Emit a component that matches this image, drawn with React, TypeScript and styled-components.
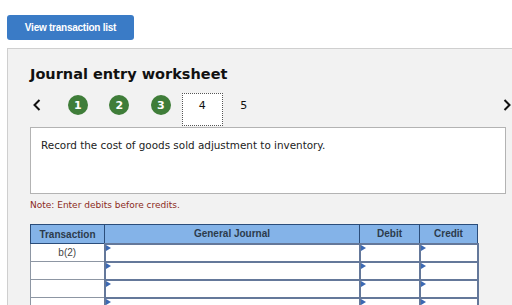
import React from 'react';
import styled, { createGlobalStyle } from 'styled-components';

const GlobalStyle = createGlobalStyle`
  html, body {
    margin: 0;
    padding: 0;
    background: #fff;
    overflow: hidden;
  }
  * {
    box-sizing: border-box;
  }
`;

const STEPS = [
  { label: '1', done: true },
  { label: '2', done: true },
  { label: '3', done: true },
  { label: '4', active: true },
  { label: '5' }
];

const ROWS = ['b(2)', '', '', ''];

const Chevron = ({ dir }: { dir: 'left' | 'right' }) => (
  <svg width="8" height="12" viewBox="0 0 8 12">
    <path
      d={dir === 'left' ? 'M6.5 1 L1.5 6 L6.5 11' : 'M1.5 1 L6.5 6 L1.5 11'}
      fill="none"
      stroke="#111"
      strokeWidth="2"
    />
  </svg>
);

const App = () => {
  return (
    <S.Page>
      <GlobalStyle />
      <S.ListButton>View transaction list</S.ListButton>
      <S.Panel>
        <S.Title>Journal entry worksheet</S.Title>
        <S.NavRow>
          <S.Steps>
            <S.Arrow>
              <Chevron dir="left" />
            </S.Arrow>
            {STEPS.map((s) => (
              <S.Step key={s.label} $active={s.active}>
                {s.done ? <S.Dot>{s.label}</S.Dot> : <S.StepNum>{s.label}</S.StepNum>}
              </S.Step>
            ))}
          </S.Steps>
          <S.ArrowRight>
            <Chevron dir="right" />
          </S.ArrowRight>
        </S.NavRow>
        <S.Prompt>Record the cost of goods sold adjustment to inventory.</S.Prompt>
        <S.Note>Note: Enter debits before credits.</S.Note>
        <S.Table>
          <colgroup>
            <col style={{ width: 74 }} />
            <col style={{ width: 255 }} />
            <col style={{ width: 60 }} />
            <col style={{ width: 58 }} />
          </colgroup>
          <thead>
            <tr>
              <S.Th>Transaction</S.Th>
              <S.Th>General Journal</S.Th>
              <S.Th>Debit</S.Th>
              <S.Th>Credit</S.Th>
            </tr>
          </thead>
          <tbody>
            {ROWS.map((r, i) => (
              <tr key={i}>
                <S.TxCell>{r}</S.TxCell>
                <S.InputCell />
                <S.InputCell />
                <S.InputCell />
              </tr>
            ))}
          </tbody>
        </S.Table>
      </S.Panel>
    </S.Page>
  );
};

export default App;

const S = {
  Page: styled.div`
    padding: 15px 0 0 7px;
    width: 512px;
    height: 305px;
    font-family: 'DejaVu Sans', Verdana, sans-serif;
  `,
  ListButton: styled.div`
    display: flex;
    align-items: center;
    justify-content: center;
    width: 127px;
    height: 25px;
    border-radius: 3px;
    background-color: #3a7bc6;
    color: #fff;
    font-family: 'Liberation Sans', Arial, sans-serif;
    font-size: 10px;
    font-weight: 700;
    letter-spacing: -0.25px;
  `,
  Panel: styled.div`
    margin-top: 8px;
    width: 520px;
    height: 280px;
    border: 1px solid #cfcfcf;
    background-color: #f2f2f2;
    padding: 16px 0 0 22px;
  `,
  Title: styled.div`
    font-size: 14.5px;
    line-height: 18px;
    font-weight: 700;
    color: #111;
  `,
  NavRow: styled.div`
    display: flex;
    align-items: flex-start;
    justify-content: space-between;
    width: 482px;
    margin-top: 10px;
    height: 33px;
  `,
  Steps: styled.div`
    display: flex;
    align-items: stretch;
    height: 33px;
  `,
  Arrow: styled.div`
    display: flex;
    align-items: center;
    width: 27px;
    height: 24px;
    padding-left: 3px;
  `,
  ArrowRight: styled.div`
    display: flex;
    align-items: center;
    height: 24px;
    padding-right: 1px;
  `,
  Step: styled.div<{ $active?: boolean }>`
    display: flex;
    justify-content: center;
    align-items: flex-start;
    width: 41.5px;
    padding-top: 1px;
    background-color: ${(p) => (p.$active ? '#fff' : 'transparent')};
    border: ${(p) => (p.$active ? '1px dotted #555' : '1px solid transparent')};
  `,
  Dot: styled.div`
    display: flex;
    align-items: center;
    justify-content: center;
    width: 20px;
    height: 20px;
    border-radius: 50%;
    background-color: #3f7d39;
    color: #fff;
    font-size: 11px;
    font-weight: 700;
  `,
  StepNum: styled.div`
    height: 20px;
    line-height: 21px;
    font-size: 11px;
    color: #111;
  `,
  Prompt: styled.div`
    width: 476px;
    height: 67px;
    margin-top: 1px;
    border: 1px solid #b3b3b3;
    background-color: #fff;
    padding: 10px 10px;
    font-size: 10.4px;
    line-height: 14px;
    color: #222;
  `,
  Note: styled.div`
    margin-top: 5px;
    font-size: 9px;
    line-height: 12px;
    color: #8c2a22;
  `,
  Table: styled.table`
    margin-top: 13px;
    width: 447px;
    border-collapse: collapse;
    table-layout: fixed;
    font-family: 'Liberation Sans', Arial, sans-serif;
  `,
  Th: styled.th`
    height: 19px;
    padding: 0;
    background-color: #84b3e8;
    border: 1px solid #2b4d7a;
    font-size: 10px;
    font-weight: 700;
    color: #2c3b4c;
    text-align: center;
  `,
  TxCell: styled.td`
    height: 18px;
    padding: 0;
    background-color: #fff;
    border: 1px solid #8d96a3;
    font-size: 10px;
    color: #444;
    text-align: center;
  `,
  InputCell: styled.td`
    position: relative;
    height: 18px;
    padding: 0;
    background-color: #fff;
    border: 2px solid #64789a;
    &::before {
      content: '';
      position: absolute;
      top: 0;
      left: 0;
      border-top: 3px solid transparent;
      border-bottom: 3px solid transparent;
      border-left: 5px solid #3c69b3;
    }
  `
};
